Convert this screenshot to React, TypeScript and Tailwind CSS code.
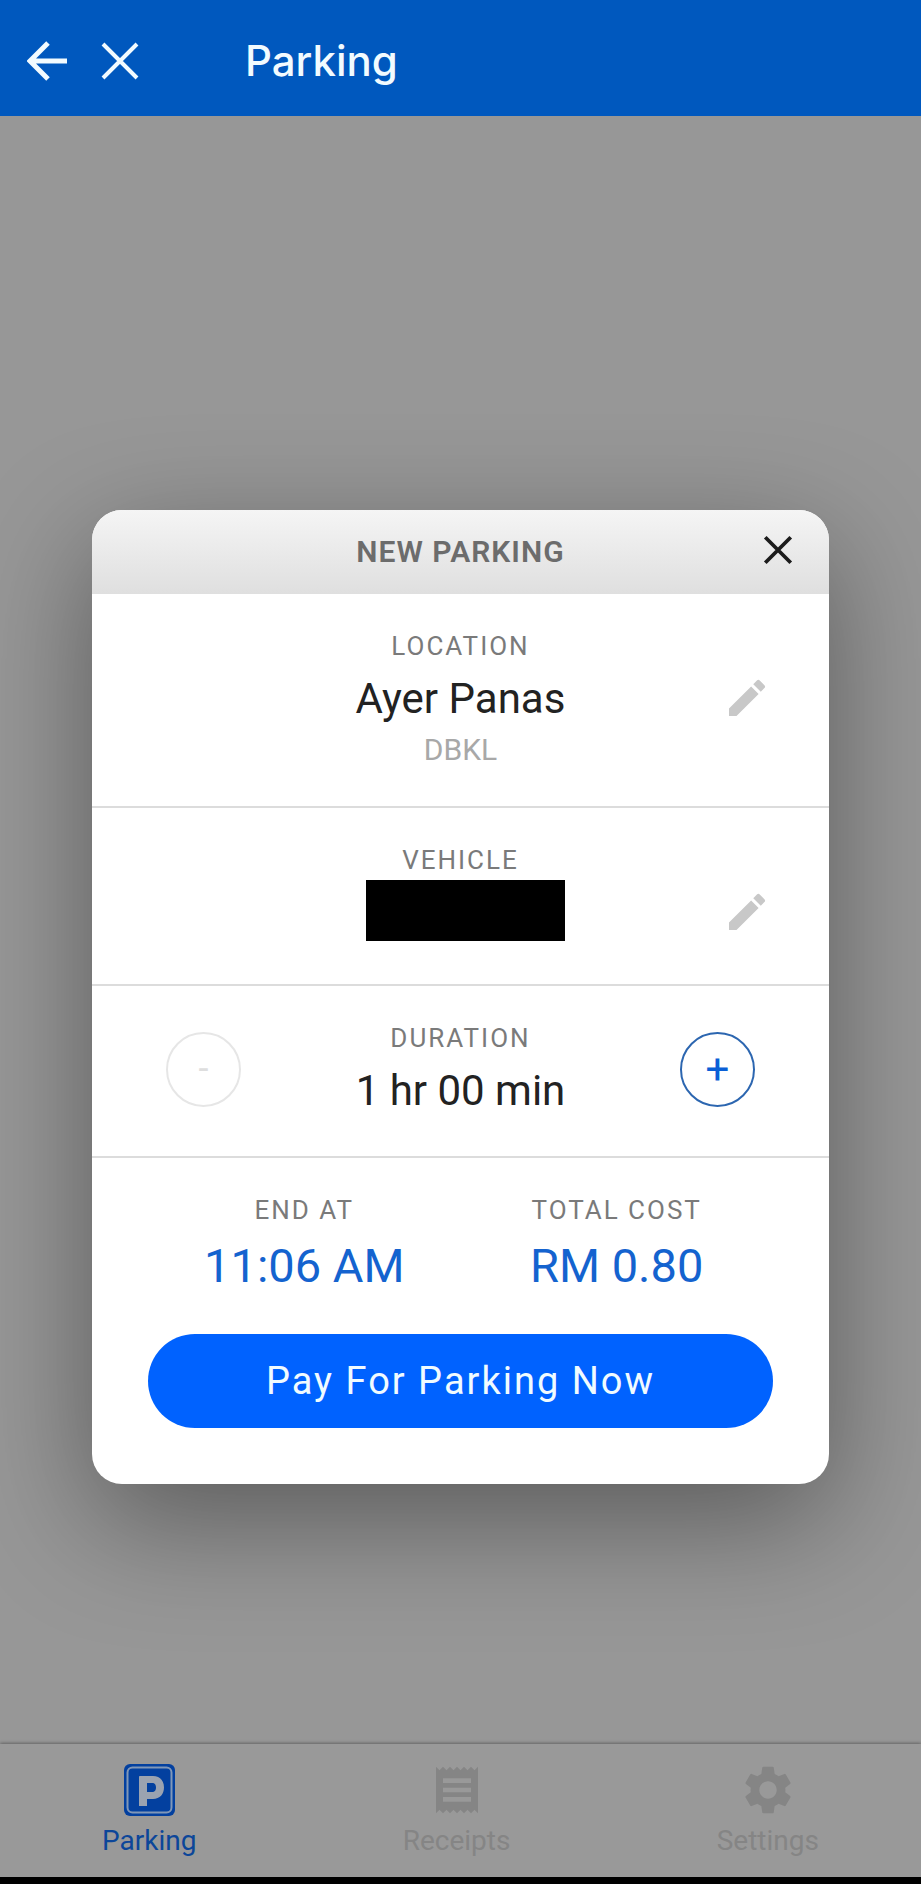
import type { ReactNode } from 'react';
import { MdEdit, MdReceipt, MdSettings } from 'react-icons/md';
import clsx from 'clsx';

const BackIcon = () => (
  <svg viewBox="0 0 40 40" className="size-10" fill="none" stroke="currentColor" strokeWidth={5}>
    <path d="M21 2 3 20l18 18M3 20h37" />
  </svg>
);

const CrossIcon = ({ className, width }: { className: string; width: number }) => (
  <svg viewBox="0 0 40 40" className={className} fill="none" stroke="currentColor" strokeWidth={width}>
    <path d="M3 3l34 34M37 3 3 37" />
  </svg>
);

const ParkingIcon = () => (
  <svg viewBox="0 0 51 52" className="h-[52px] w-[51px]" fill="none">
    <rect width="51" height="52" rx="6" fill="#03409f" />
    <rect x="3.500" y="3.500" width="44" height="45" rx="5" stroke="#8097b8" strokeWidth="2" />
    <path
      d="M16 12h13c7 0 11 5 11 11.500S36 35 29 35h-6v7h-8V13c0-.6.4-1 1-1zM23 19v9h5c3 0 4-2 4-4.500S31 19 28 19z"
      fill="#9ba3b0"
      fillRule="evenodd"
    />
  </svg>
);

const Label = ({ children }: { children: ReactNode }) => (
  <p className="text-[26px] leading-8 tracking-[2px] text-[#7a7a7a]">{children}</p>
);

const EditButton = ({ label }: { label: string }) => (
  <button aria-label={label} className="mt-11 self-start justify-self-end text-[#c8c8c8]">
    <MdEdit size={48} />
  </button>
);

interface RowProps {
  label: string;
  left?: ReactNode;
  right?: ReactNode;
  className?: string;
  children: ReactNode;
}

const Row = ({ label, left, right, className, children }: RowProps) => (
  <section
    className={clsx(
      'grid grid-cols-[1fr_2fr_1fr] border-b-2 border-[#dcdcdc] px-[58px] pt-9 text-center',
      className
    )}
  >
    <div className="grid">{left}</div>
    <div>
      <Label>{label}</Label>
      {children}
    </div>
    <div className="grid">{right}</div>
  </section>
);

const tabs = [
  { name: 'Parking', icon: <ParkingIcon />, active: true },
  { name: 'Receipts', icon: <MdReceipt size={56} />, active: false },
  { name: 'Settings', icon: <MdSettings size={58} />, active: false },
];

export default function App() {
  return (
    <div className="flex min-h-screen flex-col bg-[#979797] font-[Roboto,sans-serif]">
      <header className="flex h-[116px] items-center bg-[#0058be] px-[27px] pt-1.5 text-[#f2fbff]">
        <button aria-label="Back">
          <BackIcon />
        </button>
        <button aria-label="Close page" className="ml-[33px]">
          <CrossIcon className="size-10" width={4} />
        </button>
        <h1 className="ml-[105px] font-[Inter,sans-serif] text-[42px] leading-[52px] font-medium">Parking</h1>
      </header>

      <main className="flex-1 pt-[394px] pb-16">
        <div
          role="dialog"
          aria-labelledby="dialog-title"
          className="mx-auto w-4/5 overflow-hidden rounded-[30px] bg-white shadow-[0_36px_120px_rgba(0,0,0,0.4)]"
        >
          <div className="grid h-[84px] grid-cols-[1fr_auto_1fr] items-center bg-linear-to-b from-[#f5f5f5] to-[#dfdfdf] px-9">
            <h2 id="dialog-title" className="col-start-2 text-[30px] leading-9 font-semibold tracking-[1px] text-[#6c6c6c]">
              NEW PARKING
            </h2>
            <button aria-label="Close" className="justify-self-end pb-1 text-[#1c1c1c]">
              <CrossIcon className="size-[30px]" width={5} />
            </button>
          </div>

          <Row label="LOCATION" className="pb-[38px]" right={<EditButton label="Edit location" />}>
            <p className="mt-3 text-[42px] leading-[50px] text-[#222]">Ayer Panas</p>
            <p className="mt-2 text-[30px] leading-9 text-[#a8a8a8]">DBKL</p>
          </Row>

          <Row label="VEHICLE" className="pb-[43px]" right={<EditButton label="Edit vehicle" />}>
            <div className="mt-1 flex justify-center pl-2.5">
              <div className="h-[61px] w-[199px] bg-black" />
            </div>
          </Row>

          <Row
            label="DURATION"
            className="pb-10"
            left={
              <button
                disabled
                aria-label="Less time"
                className="mx-4 size-[75px] self-center rounded-full border-2 border-[#e6e6e6] text-[36px] text-[#dedede]"
              >
                -
              </button>
            }
            right={
              <button
                aria-label="More time"
                className="mx-4 size-[75px] self-center justify-self-end rounded-full border-2 border-[#2c66b0] text-[42px] text-[#0a5fd6]"
              >
                +
              </button>
            }
          >
            <p className="mt-3 text-[42px] leading-[50px] text-[#222]">1 hr 00 min</p>
          </Row>

          <div className="px-14 pt-9 pb-14">
            <div className="grid grid-cols-2 text-center text-[#1463cf]">
              <div>
                <Label>END AT</Label>
                <p className="mt-3 text-[47px] leading-[56px]">11:06 AM</p>
              </div>
              <div>
                <Label>TOTAL COST</Label>
                <p className="mt-3 text-[47px] leading-[56px]">RM 0.80</p>
              </div>
            </div>
            <button className="mt-10 h-[94px] w-full rounded-full bg-[#0062ff] text-[38px] tracking-[2px] text-[#f0fbff]">
              Pay For Parking Now
            </button>
          </div>
        </div>
      </main>

      <nav className="flex h-[133px] items-start justify-between bg-[#999] px-[102px] pt-[19px] shadow-[0_-1px_3px_rgba(0,0,0,0.35)]">
        {tabs.map(tab => (
          <a
            key={tab.name}
            href="#"
            className={clsx(
              'flex flex-col items-center text-[28px] leading-8',
              tab.active ? 'text-[#0c4699]' : 'text-[#858585]'
            )}
          >
            <span className="flex h-[54px] items-center">{tab.icon}</span>
            <span className="mt-2">{tab.name}</span>
          </a>
        ))}
      </nav>
      <div className="h-[7px] bg-black" />
    </div>
  );
}
